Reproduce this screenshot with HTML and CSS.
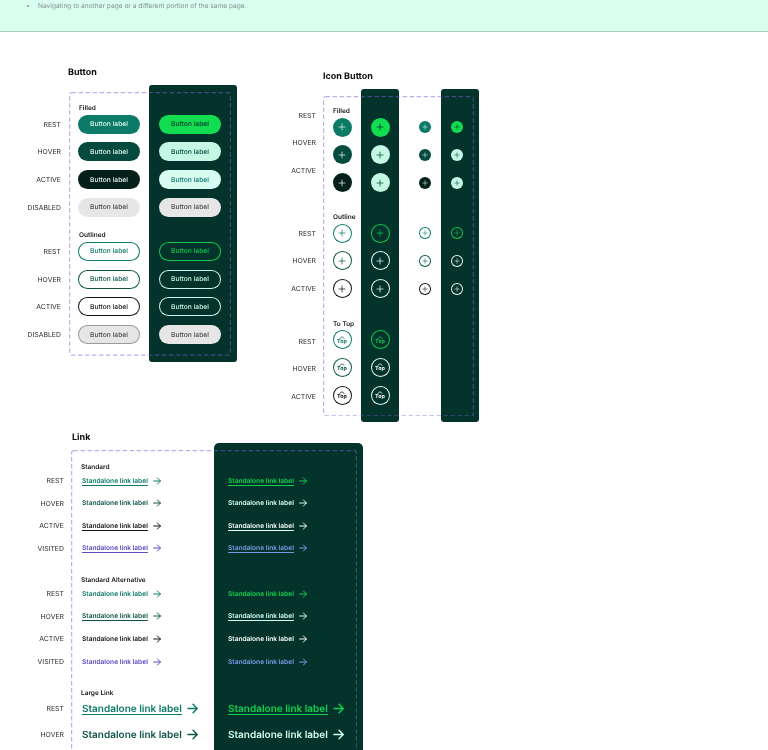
FILE: index.html
```html
<!DOCTYPE html>
<html lang="en">
<head>
<meta charset="utf-8">
<title>Component states</title>
<link rel="stylesheet" href="styles.css">
</head>
<body>
<svg class="defs" aria-hidden="true">
  <symbol id="plus" viewBox="0 0 12 12"><path d="M6 1.5v9M1.5 6h9" fill="none" stroke="currentColor" stroke-width="1.1" stroke-linecap="round"/></symbol>
  <symbol id="arrow" viewBox="0 0 12 12"><path d="M1 6h10M6.6 1.4 11.2 6l-4.6 4.6" fill="none" stroke="currentColor" stroke-width="1.5" stroke-linecap="round" stroke-linejoin="round"/></symbol>
  <symbol id="chev" viewBox="0 0 8 4"><path d="M1 3.4 4 .9l3 2.5" fill="none" stroke="currentColor" stroke-width="1.1" stroke-linecap="round" stroke-linejoin="round"/></symbol>
</svg>

<header class="banner">
  <ul class="banner-list"><li>Navigating to another page or a different portion of the same page.</li></ul>
</header>

<main class="sheet">
  <div class="sheet-top">
    <section class="spec spec-button">
      <h2 class="spec-title">Button</h2>
      <div class="board">
        <div class="col labels">
          <div class="title"></div>
          <div class="rows">
            <div class="lab">REST</div><div class="lab">HOVER</div><div class="lab">ACTIVE</div><div class="lab">DISABLED</div>
          </div>
          <div class="title next"></div>
          <div class="rows">
            <div class="lab">REST</div><div class="lab">HOVER</div><div class="lab">ACTIVE</div><div class="lab">DISABLED</div>
          </div>
        </div>
        <div class="col light">
          <div class="title">Filled</div>
          <div class="rows">
            <div class="btn f-rest">Button label</div><div class="btn f-hover">Button label</div><div class="btn f-active">Button label</div><div class="btn f-dis">Button label</div>
          </div>
          <div class="title next">Outlined</div>
          <div class="rows">
            <div class="btn o-rest">Button label</div><div class="btn o-hover">Button label</div><div class="btn o-active">Button label</div><div class="btn o-dis">Button label</div>
          </div>
        </div>
        <div class="col dark">
          <div class="title"></div>
          <div class="rows">
            <div class="btn fd-rest">Button label</div><div class="btn fd-hover">Button label</div><div class="btn fd-active">Button label</div><div class="btn f-dis">Button label</div>
          </div>
          <div class="title next"></div>
          <div class="rows">
            <div class="btn od-rest">Button label</div><div class="btn od-hover">Button label</div><div class="btn od-hover">Button label</div><div class="btn f-dis">Button label</div>
          </div>
        </div>
        <svg class="dash" aria-hidden="true"><rect class="dash-line" x=".6" y=".6" rx="2"/></svg>
      </div>
    </section>

    <section class="spec spec-icon">
      <h2 class="spec-title">Icon Button</h2>
      <div class="board">
        <div class="col labels">
          <div class="title"></div>
          <div class="rows raised">
            <div class="lab">REST</div><div class="lab">HOVER</div><div class="lab">ACTIVE</div>
          </div>
          <div class="title next"></div>
          <div class="rows">
            <div class="lab">REST</div><div class="lab">HOVER</div><div class="lab">ACTIVE</div>
          </div>
          <div class="title last"></div>
          <div class="rows lowered">
            <div class="lab">REST</div><div class="lab">HOVER</div><div class="lab">ACTIVE</div>
          </div>
        </div>
        <div class="col icol">
          <div class="title">Filled</div>
          <div class="rows">
            <div class="ib f-rest"><svg><use href="#plus"/></svg></div><div class="ib f-hover"><svg><use href="#plus"/></svg></div><div class="ib f-active"><svg><use href="#plus"/></svg></div>
          </div>
          <div class="title next">Outline</div>
          <div class="rows">
            <div class="ib o-rest"><svg><use href="#plus"/></svg></div><div class="ib o-hover"><svg><use href="#plus"/></svg></div><div class="ib o-active"><svg><use href="#plus"/></svg></div>
          </div>
          <div class="title last">To Top</div>
          <div class="rows">
            <div class="ib top o-rest"><svg><use href="#chev"/></svg><span>Top</span></div><div class="ib top o-hover"><svg><use href="#chev"/></svg><span>Top</span></div><div class="ib top o-active"><svg><use href="#chev"/></svg><span>Top</span></div>
          </div>
        </div>
        <div class="col dark icol">
          <div class="title"></div>
          <div class="rows">
            <div class="ib fd-rest"><svg><use href="#plus"/></svg></div><div class="ib fd-hover"><svg><use href="#plus"/></svg></div><div class="ib fd-hover"><svg><use href="#plus"/></svg></div>
          </div>
          <div class="title next"></div>
          <div class="rows">
            <div class="ib od-rest"><svg><use href="#plus"/></svg></div><div class="ib od-white"><svg><use href="#plus"/></svg></div><div class="ib od-white"><svg><use href="#plus"/></svg></div>
          </div>
          <div class="title last"></div>
          <div class="rows">
            <div class="ib top od-rest"><svg><use href="#chev"/></svg><span>Top</span></div><div class="ib top od-white"><svg><use href="#chev"/></svg><span>Top</span></div><div class="ib top od-white"><svg><use href="#chev"/></svg><span>Top</span></div>
          </div>
        </div>
        <div class="col icol small-light">
          <div class="title"></div>
          <div class="rows">
            <div class="ib sm f-rest"><svg><use href="#plus"/></svg></div><div class="ib sm f-hover"><svg><use href="#plus"/></svg></div><div class="ib sm f-active"><svg><use href="#plus"/></svg></div>
          </div>
          <div class="title next"></div>
          <div class="rows">
            <div class="ib sm o-rest"><svg><use href="#plus"/></svg></div><div class="ib sm o-hover"><svg><use href="#plus"/></svg></div><div class="ib sm o-active"><svg><use href="#plus"/></svg></div>
          </div>
        </div>
        <div class="col dark icol small-dark">
          <div class="title"></div>
          <div class="rows">
            <div class="ib sm fd-rest"><svg><use href="#plus"/></svg></div><div class="ib sm fd-hover"><svg><use href="#plus"/></svg></div><div class="ib sm fd-hover"><svg><use href="#plus"/></svg></div>
          </div>
          <div class="title next"></div>
          <div class="rows">
            <div class="ib sm od-rest"><svg><use href="#plus"/></svg></div><div class="ib sm od-white"><svg><use href="#plus"/></svg></div><div class="ib sm od-white"><svg><use href="#plus"/></svg></div>
          </div>
        </div>
        <svg class="dash" aria-hidden="true"><rect class="dash-line" x=".6" y=".6" rx="2"/></svg>
      </div>
    </section>
  </div>

  <section class="spec spec-link">
    <h2 class="spec-title">Link</h2>
    <div class="board">
      <div class="col labels">
        <div class="title"></div>
        <div class="rows">
          <div class="lab">REST</div><div class="lab">HOVER</div><div class="lab">ACTIVE</div><div class="lab">VISITED</div>
        </div>
        <div class="title next"></div>
        <div class="rows">
          <div class="lab">REST</div><div class="lab">HOVER</div><div class="lab">ACTIVE</div><div class="lab">VISITED</div>
        </div>
        <div class="title large"></div>
        <div class="rows rows-lg">
          <div class="lab">REST</div><div class="lab">HOVER</div>
        </div>
      </div>
      <div class="col light">
        <div class="title">Standard</div>
        <div class="rows">
          <a class="lnk l-rest"><u>Standalone link label</u><svg><use href="#arrow"/></svg></a>
          <a class="lnk l-hover"><span>Standalone link label</span><svg><use href="#arrow"/></svg></a>
          <a class="lnk l-active"><u>Standalone link label</u><svg><use href="#arrow"/></svg></a>
          <a class="lnk l-visited"><u>Standalone link label</u><svg><use href="#arrow"/></svg></a>
        </div>
        <div class="title next">Standard Alternative</div>
        <div class="rows">
          <a class="lnk l-rest"><span>Standalone link label</span><svg><use href="#arrow"/></svg></a>
          <a class="lnk l-hover"><u>Standalone link label</u><svg><use href="#arrow"/></svg></a>
          <a class="lnk l-active"><span>Standalone link label</span><svg><use href="#arrow"/></svg></a>
          <a class="lnk l-visited"><span>Standalone link label</span><svg><use href="#arrow"/></svg></a>
        </div>
        <div class="title large">Large Link</div>
        <div class="rows rows-lg">
          <a class="lnk lg l-rest"><u>Standalone link label</u><svg><use href="#arrow"/></svg></a>
          <a class="lnk lg l-hover"><span>Standalone link label</span><svg><use href="#arrow"/></svg></a>
        </div>
      </div>
      <div class="col dark">
        <div class="title"></div>
        <div class="rows">
          <a class="lnk ld-rest"><u>Standalone link label</u><svg><use href="#arrow"/></svg></a>
          <a class="lnk ld-hover"><span>Standalone link label</span><svg><use href="#arrow"/></svg></a>
          <a class="lnk ld-active"><u>Standalone link label</u><svg><use href="#arrow"/></svg></a>
          <a class="lnk ld-visited"><u>Standalone link label</u><svg><use href="#arrow"/></svg></a>
        </div>
        <div class="title next"></div>
        <div class="rows">
          <a class="lnk ld-rest"><span>Standalone link label</span><svg><use href="#arrow"/></svg></a>
          <a class="lnk ld-hover"><u>Standalone link label</u><svg><use href="#arrow"/></svg></a>
          <a class="lnk ld-active"><span>Standalone link label</span><svg><use href="#arrow"/></svg></a>
          <a class="lnk ld-visited"><span>Standalone link label</span><svg><use href="#arrow"/></svg></a>
        </div>
        <div class="title large"></div>
        <div class="rows rows-lg">
          <a class="lnk lg ld-rest"><u>Standalone link label</u><svg><use href="#arrow"/></svg></a>
          <a class="lnk lg ld-hover"><span>Standalone link label</span><svg><use href="#arrow"/></svg></a>
        </div>
      </div>
      <svg class="dash" aria-hidden="true"><rect class="dash-line" x=".6" y=".6" rx="2"/></svg>
    </div>
  </section>
</main>
</body>
</html>
```
FILE: styles.css
```css
* { box-sizing: border-box; }
html, body { margin: 0; height: 750px; overflow: hidden; background: #fff; }
body { font-family: Inter, "Liberation Sans", sans-serif; color: #111; filter: blur(.3px); text-rendering: geometricPrecision; }
.defs { display: none; }

.banner { height: 32px; background: #d9fff1; border-bottom: 1px solid #a3cdbf; }
.banner-list { margin: 0; padding: 2px 0 0 38px; font-size: 6.6px; line-height: 9px; color: #84938e; }

.sheet { padding-top: 34px; }
.sheet-top { display: flex; align-items: flex-start; height: 355px; padding-left: 20px; }

.spec-title { height: 12px; margin: 0 0 7px; font-size: 9px; line-height: 14px; font-weight: 700; color: #0c0c0c; }
.spec-button .spec-title { padding-left: 48px; }
.spec-icon { margin: 4px 0 0 38px; }
.spec-icon .spec-title { padding-left: 48px; }
.spec-link { margin: 10px 0 0 20px; }
.spec-link .spec-title { margin-bottom: 0; padding-left: 52px; }

.board { position: relative; display: grid; width: fit-content; }
.spec-button .board { grid-template-columns: 49px 80px 88px; }
.spec-icon .board { grid-template-columns: 48px 38px 38px 42px 38px; }
.spec-link .board { grid-template-columns: 51px 143px 149px; }

.dash { position: absolute; top: 7px; bottom: 6px; right: 6px; height: calc(100% - 13px); pointer-events: none; }
.dash-line { width: calc(100% - 1.2px); height: calc(100% - 1.2px); fill: none; stroke: rgba(125, 95, 215, .5); stroke-width: 1.2px; stroke-dasharray: 4.5 2.5; }
.spec-button .dash { left: 49px; width: 162px; }
.spec-icon .dash { left: 48px; right: 5px; width: 151px; }
.spec-link .dash { left: 51px; width: 286px; }

.col { display: flex; flex-direction: column; padding-bottom: 17.5px; }
.spec-button .col { padding-top: 15px; }
.spec-icon .col { padding-top: 14px; padding-bottom: 17.5px; }
.spec-link .col { padding-top: 15.5px; padding-bottom: 40px; }

.dark { background: #04332b; border-radius: 3px; }
.spec-link .dark { border-radius: 5px; }

.title { height: 14.5px; font-size: 6.5px; line-height: 16.5px; font-weight: 600; color: #141414; white-space: nowrap; }
.title.next { margin-top: 10.5px; }
.spec-icon .title.next { margin-top: 16.75px; }
.spec-icon .title.last { margin-top: 17.25px; }
.spec-link .title { margin-bottom: .5px; }
.spec-link .title.next { margin-top: 16.5px; }
.spec-link .title.large { margin-top: 16px; margin-bottom: 1.5px; }

.rows { display: flex; flex-direction: column; gap: 8.8px; }
.spec-icon .rows { gap: 8.9px; }
.spec-link .rows { gap: 8.6px; }
.spec-link .rows-lg { gap: 10px; }
.raised { margin-top: -12px; margin-bottom: 12px; }
.lowered { margin-top: 1.5px; margin-bottom: -1.5px; }

.labels { text-align: right; }
.lab { display: flex; align-items: center; justify-content: flex-end; height: 19px; padding-right: 8px; font-size: 6.9px; color: #2b2b2b; }
.spec-icon .lab { padding-right: 7px; }
.spec-link .lab { height: 14px; padding-right: 7px; }
.spec-link .rows-lg .lab { height: 16px; }

/* Buttons */
.spec-button .light { padding-left: 9px; }
.spec-button .light .title { padding-left: 1px; }
.spec-button .dark { padding-left: 10px; }
.btn { display: flex; align-items: center; justify-content: center; width: 62px; height: 19px; border-radius: 10px; font-size: 6.7px; font-weight: 500; }

/* Icon buttons */
.icol { align-items: stretch; }
.icol .title { padding-left: 10px; }
.ib { display: flex; flex-direction: column; align-items: center; justify-content: center; width: 19px; height: 19px; margin-left: 9.5px; border-radius: 50%; }
.ib svg { width: 8px; height: 8px; }
.ib.sm { width: 12px; height: 12px; margin: 3.5px 0 3.5px 0; }
.ib.sm svg { width: 6px; height: 6px; }
.small-light .ib.sm { margin-left: 20px; }
.small-dark .ib.sm { margin-left: 9.5px; }
.ib.top svg { width: 6px; height: 3px; margin-top: 1px; }
.ib.top span { font-size: 5.4px; line-height: 6px; font-weight: 700; }

/* State colours */
.f-rest { background: #0b7a67; color: #dff8ef; }
.f-hover { background: #054a3e; color: #dff8ef; }
.f-active { background: #05201b; color: #dff8ef; }
.f-dis { background: #e6e6e6; color: #4a4a4a; }
.fd-rest { background: #12dc50; color: #04332b; }
.fd-hover { background: #c4f8e4; color: #054a3e; }
.fd-active { background: #d7fbf0; color: #0b7a67; }
.o-rest { box-shadow: inset 0 0 0 1px #0b7a67; color: #0b7a67; background: #fff; }
.o-hover { box-shadow: inset 0 0 0 1px #0e5548; color: #0e5548; background: #fff; }
.o-active { box-shadow: inset 0 0 0 1px #141414; color: #141414; background: #fff; }
.o-dis { box-shadow: inset 0 0 0 1px #9a9a9a; background: #e6e6e6; color: #4a4a4a; }
.od-rest { box-shadow: inset 0 0 0 1px #12c850; color: #12c850; }
.od-hover { box-shadow: inset 0 0 0 1px #c4f8e4; color: #c4f8e4; }
.od-white { box-shadow: inset 0 0 0 1px #e8f8f2; color: #f2fbf7; }

/* Links */
.spec-link .light { padding-left: 11px; }
.spec-link .light .title { margin-left: -1px; }
.spec-link .dark { padding-left: 14px; }
.lnk { display: flex; align-items: center; gap: 5.5px; height: 14px; font-size: 6.6px; font-weight: 600; white-space: nowrap; }
.lnk svg { width: 8px; height: 8px; flex: none; }
.lnk u { text-decoration-thickness: .6px; text-underline-offset: 1.5px; }
.lnk.lg { height: 16px; font-size: 10px; gap: 5px; }
.lnk.lg svg { width: 11px; height: 11px; }
.lnk.lg u { text-decoration-thickness: .8px; }
.l-rest { color: #0b7a67; }
.l-hover { color: #0e5548; }
.l-active { color: #141414; }
.l-visited { color: #5b4cc4; }
.ld-rest { color: #12d050; }
.ld-hover { color: #d4fbec; }
.ld-active { color: #f4fbf8; }
.ld-visited { color: #7a9bea; }
```
